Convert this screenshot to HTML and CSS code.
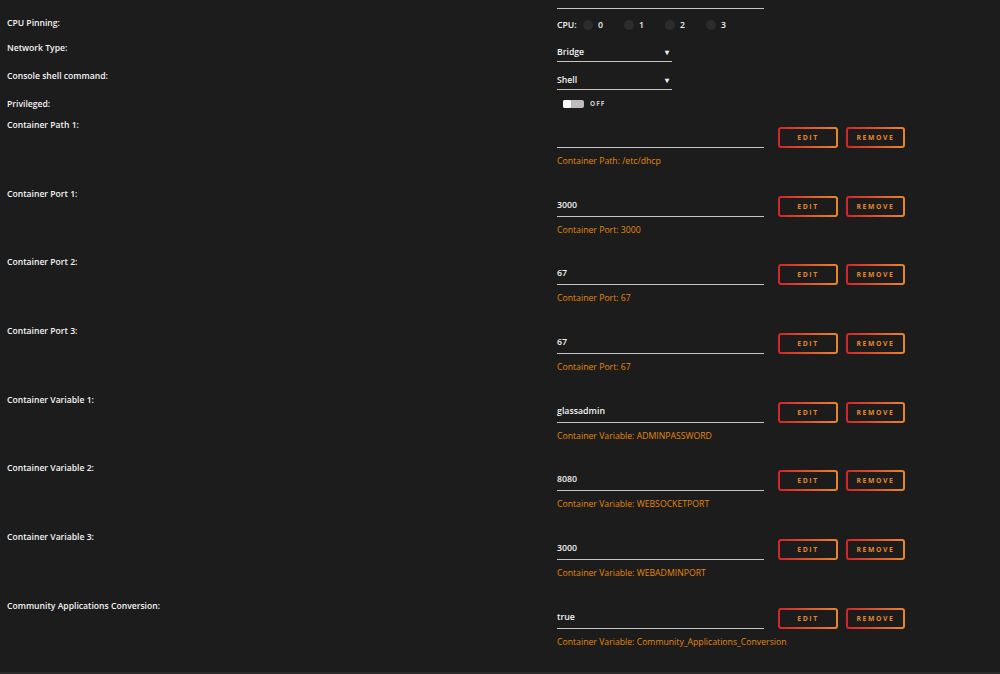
FILE: index.html
```html
<!DOCTYPE html>
<html>
<head>
<meta charset="utf-8">
<link rel="stylesheet" href="styles.css">
</head>
<body>
<div class="form">
  <div class="row row-first">
    <div class="label"></div>
    <div class="field"><div class="input blank"></div></div>
  </div>

  <div class="row row-cpu">
    <div class="label">CPU Pinning:</div>
    <div class="field cpu">
      <span class="cpu-title">CPU:</span>
      <span class="cpu-item"><span class="radio"></span>0</span>
      <span class="cpu-item"><span class="radio"></span>1</span>
      <span class="cpu-item"><span class="radio"></span>2</span>
      <span class="cpu-item"><span class="radio"></span>3</span>
    </div>
  </div>

  <div class="row row-select">
    <div class="label">Network Type:</div>
    <div class="field"><div class="select">Bridge<span class="caret">▾</span></div></div>
  </div>

  <div class="row row-select">
    <div class="label">Console shell command:</div>
    <div class="field"><div class="select">Shell<span class="caret">▾</span></div></div>
  </div>

  <div class="row row-priv">
    <div class="label">Privileged:</div>
    <div class="field toggle-field">
      <span class="toggle"><span class="knob"></span></span>
      <span class="toggle-text">OFF</span>
    </div>
  </div>

  <div class="row cfg">
    <div class="label">Container Path 1:</div>
    <div class="field">
      <div class="cfg-line">
        <div class="input"></div>
        <button class="btn">EDIT</button>
        <button class="btn">REMOVE</button>
      </div>
      <div class="help">Container Path: /etc/dhcp</div>
    </div>
  </div>

  <div class="row cfg">
    <div class="label">Container Port 1:</div>
    <div class="field">
      <div class="cfg-line">
        <div class="input">3000</div>
        <button class="btn">EDIT</button>
        <button class="btn">REMOVE</button>
      </div>
      <div class="help">Container Port: 3000</div>
    </div>
  </div>

  <div class="row cfg">
    <div class="label">Container Port 2:</div>
    <div class="field">
      <div class="cfg-line">
        <div class="input">67</div>
        <button class="btn">EDIT</button>
        <button class="btn">REMOVE</button>
      </div>
      <div class="help">Container Port: 67</div>
    </div>
  </div>

  <div class="row cfg">
    <div class="label">Container Port 3:</div>
    <div class="field">
      <div class="cfg-line">
        <div class="input">67</div>
        <button class="btn">EDIT</button>
        <button class="btn">REMOVE</button>
      </div>
      <div class="help">Container Port: 67</div>
    </div>
  </div>

  <div class="row cfg">
    <div class="label">Container Variable 1:</div>
    <div class="field">
      <div class="cfg-line">
        <div class="input">glassadmin</div>
        <button class="btn">EDIT</button>
        <button class="btn">REMOVE</button>
      </div>
      <div class="help">Container Variable: ADMINPASSWORD</div>
    </div>
  </div>

  <div class="row cfg">
    <div class="label">Container Variable 2:</div>
    <div class="field">
      <div class="cfg-line">
        <div class="input">8080</div>
        <button class="btn">EDIT</button>
        <button class="btn">REMOVE</button>
      </div>
      <div class="help">Container Variable: WEBSOCKETPORT</div>
    </div>
  </div>

  <div class="row cfg">
    <div class="label">Container Variable 3:</div>
    <div class="field">
      <div class="cfg-line">
        <div class="input">3000</div>
        <button class="btn">EDIT</button>
        <button class="btn">REMOVE</button>
      </div>
      <div class="help">Container Variable: WEBADMINPORT</div>
    </div>
  </div>

  <div class="row cfg">
    <div class="label">Community Applications Conversion:</div>
    <div class="field">
      <div class="cfg-line">
        <div class="input">true</div>
        <button class="btn">EDIT</button>
        <button class="btn">REMOVE</button>
      </div>
      <div class="help">Container Variable: Community_Applications_Conversion</div>
    </div>
  </div>

  <div class="row more">
    <div class="label"></div>
    <div class="field"><span class="more-link">Show more settings ...</span></div>
  </div>
</div>
<div class="footer"></div>
</body>
</html>
```

FILE: styles.css
```css
html, body {
  margin: 0;
  padding: 0;
  background: #1c1c1c;
  overflow: hidden;
}
body {
  padding-top: 1px;
  font-family: "Open Sans", "Liberation Sans", sans-serif;
  color: #f2f2f2;
  font-size: 8.7px;
  line-height: 12px;
}
.form {
  display: flex;
  flex-direction: column;
}
.row {
  display: flex;
}
.label {
  width: 557px;
  padding-left: 7px;
  box-sizing: border-box;
  font-weight: 600;
  font-size: 8.6px;
  color: #f4f4f4;
  flex: none;
}
.field {
  flex: none;
  width: 400px;
}
.row-first { height: 9px; }
.row-first .input.blank {
  height: 8px;
  padding: 0;
}
.input {
  width: 207px;
  box-sizing: border-box;
  border-bottom: 1px solid #c4c4c4;
  padding: 11px 0 5px;
  height: 29px;
  font-weight: 600;
  font-size: 8.8px;
  color: #f2f2f2;
}
.row-cpu { height: 28px; }
.row-cpu .label { padding-top: 7px; }
.cpu {
  padding-top: 9px;
  display: flex;
  align-items: center;
  height: 12px;
  font-weight: 600;
}
.cpu-title { width: 26px; }
.cpu-item {
  display: inline-flex;
  align-items: center;
  width: 41px;
}
.radio {
  width: 10px;
  height: 10px;
  border-radius: 50%;
  background: #2c2c2c;
  margin-right: 5px;
}
.row-select { height: 28px; }
.row-select .label { padding-top: 4px; }
.select {
  width: 115px;
  box-sizing: border-box;
  padding: 8px 0 3px;
  height: 24px;
  border-bottom: 1px solid #c4c4c4;
  font-weight: 600;
  display: flex;
  justify-content: space-between;
}
.caret {
  font-size: 8px;
  padding-right: 3px;
}
.row-priv { height: 25px; }
.row-priv .label { padding-top: 4px; }
.toggle-field {
  display: flex;
  align-items: center;
  padding-top: 6px;
  height: 8px;
}
.toggle {
  margin-left: 6px;
  width: 21px;
  height: 8px;
  border-radius: 2px;
  background: #bdbdbd;
  display: flex;
}
.knob {
  width: 8px;
  height: 8px;
  border-radius: 2px;
  background: #ffffff;
}
.toggle-text {
  margin-left: 6px;
  font-size: 6.5px;
  font-weight: 700;
  letter-spacing: 1px;
  color: #d0d0d0;
}
.cfg { height: 68.7px; }
.cfg-line {
  display: flex;
  align-items: flex-end;
}
.btn {
  box-sizing: border-box;
  height: 21px;
  margin: 0;
  margin-left: 14px;
  width: 60px;
  padding: 0;
  border: 2px solid transparent;
  border-radius: 3px;
  background:
    linear-gradient(#1c1c1c, #1c1c1c) padding-box,
    linear-gradient(90deg, #d4242a, #e8862c) border-box;
  color: #e8862c;
  font-family: "Open Sans", "Liberation Sans", sans-serif;
  font-size: 6.8px;
  font-weight: 700;
  letter-spacing: 1.6px;
  text-align: center;
}
.btn + .btn {
  margin-left: 8px;
  width: 59px;
}
.help {
  margin-top: 7px;
  color: #e3880c;
}
.more { height: 20px; }
.more .field { padding-top: 45px; }
.more-link {
  margin-left: 14px;
  color: #3a4e78;
}
.footer {
  position: fixed;
  left: 0;
  right: 0;
  bottom: 0;
  height: 2px;
  background: #2a2a2a;
}
```
